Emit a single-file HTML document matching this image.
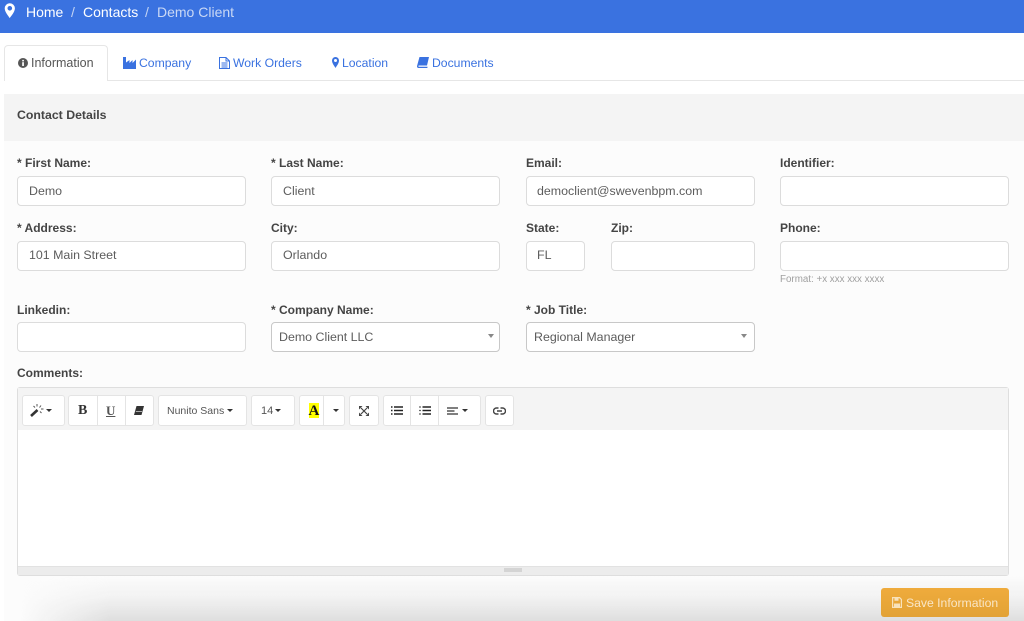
<!DOCTYPE html>
<html><head><meta charset="utf-8">
<style>
html,body{margin:0;padding:0;background:#fff}
#p{position:relative;width:1024px;height:621px;overflow:hidden;background:#fff;font-family:"Liberation Sans",sans-serif;color:#555;filter:blur(.3px)}
#p div,#p span.t,#p svg{position:absolute}
.t{white-space:nowrap;line-height:16px}
.l{font-weight:700;font-size:12px;color:#444}
.i{background:#fff;border:1px solid #dcdcdc;border-radius:4px;box-sizing:border-box;height:30px}
.v{font-size:12.4px;color:#5c5c5c}
.tab{font-size:12.2px;color:#3a72e0}
.b{background:#fff;border:1px solid #e4e4e4;border-radius:3px;box-sizing:border-box;height:31px;top:395px}
.s{width:1px;background:#e4e4e4;top:396px;height:29px}
.c{width:0;height:0;border-left:3px solid transparent;border-right:3px solid transparent;border-top:3.5px solid #333}
.sc{width:0;height:0;border-left:3.5px solid transparent;border-right:3.5px solid transparent;border-top:4.5px solid #888}
</style></head><body><div id="p">

<div style="left:0;top:0;width:1024px;height:33px;background:#3a72e0"></div>
<svg style="left:4px;top:2px" width="12" height="17" viewBox="0 0 12 16"><path fill="#fff" fill-rule="evenodd" d="M5.700 15.600C4.600 13.600.7 9.600.7 5.800a5.100 5.100 0 0 1 10.200 0c0 3.800-3.900 7.800-5.200 9.800zM5.800 3.500a2.300 2.300 0 1 0 0 4.600 2.300 2.300 0 0 0 0-4.600z"/></svg>
<span class="t" style="left:26px;top:4px;font-size:14px;color:#fff">Home</span>
<span class="t" style="left:71px;top:4px;font-size:14px;color:#c4d4f4">/</span>
<span class="t" style="left:83px;top:4px;font-size:14px;color:#fff">Contacts</span>
<span class="t" style="left:145px;top:4px;font-size:14px;color:#c4d4f4">/</span>
<span class="t" style="left:157px;top:4px;font-size:14px;color:#c9d8f5">Demo Client</span>

<div style="left:4px;top:80px;width:1020px;height:1px;background:#e6e6e6"></div>
<div style="left:4px;top:45px;width:104px;height:36px;background:#fff;border:1px solid #e6e6e6;border-bottom:none;border-radius:4px 4px 0 0;box-sizing:border-box"></div>
<svg style="left:18px;top:58px" width="10" height="10" viewBox="0 0 10 10"><circle cx="5" cy="5" r="5" fill="#555"/><rect x="4.200" y="4.200" width="1.700" height="3.800" fill="#fff"/><rect x="4.200" y="1.900" width="1.700" height="1.500" fill="#fff"/></svg>
<span class="t" style="left:31px;top:55px;font-size:12.5px;color:#555">Information</span>
<svg style="left:123px;top:57px" width="13" height="12" viewBox="0 0 13 12"><path fill="#3a72e0" d="M0 0h3v5.500L6.500 3v3l3-3v3L13 2.500V12H0z"/></svg>
<span class="t tab" style="left:139px;top:55px">Company</span>
<svg style="left:219px;top:57px" width="11" height="12" viewBox="0 0 11 12"><path fill="#fff" stroke="#3a72e0" d="M.5.500h6.500l3.500 3.500v7.500H.5z"/><path fill="none" stroke="#3a72e0" d="M7 .5V4h3.500M2.500 6h6M2.500 8h6M2.500 10h6"/></svg>
<span class="t tab" style="left:233px;top:55px">Work Orders</span>
<svg style="left:332px;top:57px" width="7" height="11" viewBox="0 0 7 11"><path fill="#3a72e0" fill-rule="evenodd" d="M3.500 11C2.800 9.500 0 6.500 0 3.500a3.500 3.500 0 0 1 7 0C7 6.500 4.200 9.500 3.500 11zM3.500 2a1.500 1.500 0 1 0 0 3 1.500 1.500 0 0 0 0-3z"/></svg>
<span class="t tab" style="left:342px;top:55px">Location</span>
<svg style="left:417px;top:57px" width="12" height="11" viewBox="0 0 12 11"><path fill="#3a72e0" d="M2.500 0H12L10 8.500H2C1.200 8.500 1.200 9.800 2 9.800h8.600L10.300 11H1.500C.3 11-.2 9.800.1 8.700z"/></svg>
<span class="t tab" style="left:432px;top:55px">Documents</span>

<div style="left:4px;top:94px;width:1020px;height:527px;background:#fcfcfc"></div>
<div style="left:4px;top:94px;width:1020px;height:47px;background:#f4f4f4"></div>
<span class="t" style="left:17px;top:107px;font-size:12.300px;font-weight:700;color:#444">Contact Details</span>

<span class="t l" style="left:17px;top:155px">* First Name:</span>
<span class="t l" style="left:271px;top:155px">* Last Name:</span>
<span class="t l" style="left:526px;top:155px">Email:</span>
<span class="t l" style="left:780px;top:155px">Identifier:</span>
<div class="i" style="left:17px;top:176px;width:229px"></div>
<div class="i" style="left:271px;top:176px;width:229px"></div>
<div class="i" style="left:526px;top:176px;width:229px"></div>
<div class="i" style="left:780px;top:176px;width:229px"></div>
<span class="t v" style="left:29px;top:183px">Demo</span>
<span class="t v" style="left:283px;top:183px">Client</span>
<span class="t v" style="left:537px;top:183px">democlient@swevenbpm.com</span>

<span class="t l" style="left:17px;top:220px">* Address:</span>
<span class="t l" style="left:271px;top:220px">City:</span>
<span class="t l" style="left:526px;top:220px">State:</span>
<span class="t l" style="left:611px;top:220px">Zip:</span>
<span class="t l" style="left:780px;top:220px">Phone:</span>
<div class="i" style="left:17px;top:241px;width:229px"></div>
<div class="i" style="left:271px;top:241px;width:229px"></div>
<div class="i" style="left:526px;top:241px;width:59px"></div>
<div class="i" style="left:611px;top:241px;width:144px"></div>
<div class="i" style="left:780px;top:241px;width:229px"></div>
<span class="t v" style="left:29px;top:247px">101 Main Street</span>
<span class="t v" style="left:283px;top:247px">Orlando</span>
<span class="t v" style="left:537px;top:247px">FL</span>
<span class="t" style="left:780px;top:272px;font-size:9.800px;color:#a0a0a0">Format: +x xxx xxx xxxx</span>

<span class="t l" style="left:17px;top:302px">Linkedin:</span>
<span class="t l" style="left:271px;top:302px">* Company Name:</span>
<span class="t l" style="left:526px;top:302px">* Job Title:</span>
<div class="i" style="left:17px;top:322px;width:229px"></div>
<div class="i" style="left:271px;top:322px;width:229px;border-color:#c8c8c8"></div>
<div class="i" style="left:526px;top:322px;width:229px;border-color:#c8c8c8"></div>
<span class="t v" style="left:279px;top:329px">Demo Client LLC</span>
<span class="t v" style="left:534px;top:329px">Regional Manager</span>
<div class="sc" style="left:488px;top:334px"></div>
<div class="sc" style="left:741px;top:334px"></div>

<span class="t l" style="left:17px;top:365px">Comments:</span>
<div style="left:17px;top:387px;width:992px;height:189px;background:#fff;border:1px solid #dedede;border-radius:3px;box-sizing:border-box"></div>
<div style="left:18px;top:388px;width:990px;height:42px;background:#f4f4f4"></div>
<div style="left:18px;top:566px;width:990px;height:9px;background:#ececec;border-top:1px solid #e2e2e2;box-sizing:border-box"></div>
<div style="left:504px;top:568px;width:18px;height:4px;background:#d4d4d4"></div>

<div class="b" style="left:22px;width:43px"></div>
<svg style="left:30px;top:404px" width="14" height="13" viewBox="0 0 14 13"><path stroke="#333" stroke-width="2.600" d="M1 12L7.500 6"/><path stroke="#555" stroke-width="1" d="M7 0v2.500M11 1.500L9.500 3.500M13.500 5h-2.500M3.500 2l1.500 1.500M11.500 9l-1.500-1.500"/></svg>
<div class="c" style="left:46px;top:409px"></div>

<div class="b" style="left:68px;width:86px"></div>
<div class="s" style="left:97px"></div><div class="s" style="left:125px"></div>
<span class="t" style="left:78px;top:403px;font-family:'Liberation Serif',serif;font-weight:700;font-size:14px;color:#333">B</span>
<span class="t" style="left:106px;top:403px;font-family:'Liberation Serif',serif;font-weight:700;font-size:13px;color:#555;text-decoration:underline">U</span>
<svg style="left:134px;top:406px" width="10" height="9" viewBox="0 0 10 9"><path fill="#333" d="M2.500 0H10L7.500 9H0z"/><path fill="#fff" d="M2 5h6.200l-.3 1H1.700z" opacity=".6"/></svg>

<div class="b" style="left:158px;width:89px"></div>
<span class="t" style="left:167px;top:403px;font-size:10.500px;color:#555">Nunito Sans</span>
<div class="c" style="left:227px;top:409px"></div>

<div class="b" style="left:251px;width:44px"></div>
<span class="t" style="left:261px;top:403px;font-size:11px;color:#555">14</span>
<div class="c" style="left:275px;top:409px"></div>

<div class="b" style="left:299px;width:46px"></div>
<div class="s" style="left:323px"></div>
<div style="left:309px;top:403px;width:10px;height:15px;background:#ff0"></div>
<span class="t" style="left:308.500px;top:403px;font-family:'Liberation Serif',serif;font-weight:700;font-size:15px;color:#111">A</span>
<div class="c" style="left:333px;top:409px"></div>

<div class="b" style="left:349px;width:30px"></div>
<svg style="left:359px;top:406px" width="10" height="10" viewBox="0 0 10 10"><path stroke="#444" stroke-width="1.200" fill="none" d="M2 2l6 6M8 2L2 8"/><path fill="#444" d="M0 0h3.500L0 3.500zM10 0v3.500L6.500 0zM0 10V6.500L3.500 10zM10 10H6.500L10 6.500z"/></svg>

<div class="b" style="left:383px;width:98px"></div>
<div class="s" style="left:410px"></div><div class="s" style="left:438px"></div>
<svg style="left:391px;top:406px" width="12" height="9" viewBox="0 0 12 9"><path stroke="#222" stroke-width="1.600" d="M3 1h9M3 4.500h9M3 8h9M0 1h1.500M0 4.500h1.500M0 8h1.500"/></svg>
<svg style="left:419px;top:406px" width="12" height="9" viewBox="0 0 12 9"><path stroke="#222" stroke-width="1.600" d="M3.500 1H12M3.500 4.500H12M3.500 8H12"/><path stroke="#666" stroke-width="1.200" d="M0 1h2M0 4.500h2M0 8h2"/></svg>
<svg style="left:447px;top:407px" width="12" height="8" viewBox="0 0 12 8"><path stroke="#333" stroke-width="1.300" d="M0 1h11M0 4h7.500M0 7h11"/></svg>
<div class="c" style="left:462px;top:409px"></div>

<div class="b" style="left:485px;width:29px"></div>
<svg style="left:493px;top:407px" width="13" height="8" viewBox="0 0 13 8"><path stroke="#444" stroke-width="1.400" fill="none" d="M5.500 1H3.500a3 3 0 0 0 0 6h2M7.500 1h2a3 3 0 0 1 0 6h-2M4 4h5"/></svg>

<div style="left:0;top:576px;width:1024px;height:45px;background:linear-gradient(180deg,rgba(222,222,222,0) 0%,rgba(222,222,222,.3) 45%,#dedede 100%);-webkit-mask-image:linear-gradient(90deg,transparent 20px,#000 110px);mask-image:linear-gradient(90deg,transparent 20px,#000 110px)"></div>

<div style="left:881px;top:588px;width:128px;height:29px;border-radius:3px;background:linear-gradient(180deg,#efab3c,#e2a236)"></div>
<svg style="left:892px;top:597px" width="10" height="11" viewBox="0 0 10 11"><path fill="none" stroke="#f8e2bb" stroke-width="1.200" d="M.6.600h7l1.800 1.800v8H.6z"/><path fill="#f8e2bb" d="M2.500 1h4v2.700h-4zM2 6.500h6v4H2z"/></svg>
<span class="t" style="left:906px;top:595px;font-size:12.2px;color:#f9e6c6">Save Information</span>

</div></body></html>
